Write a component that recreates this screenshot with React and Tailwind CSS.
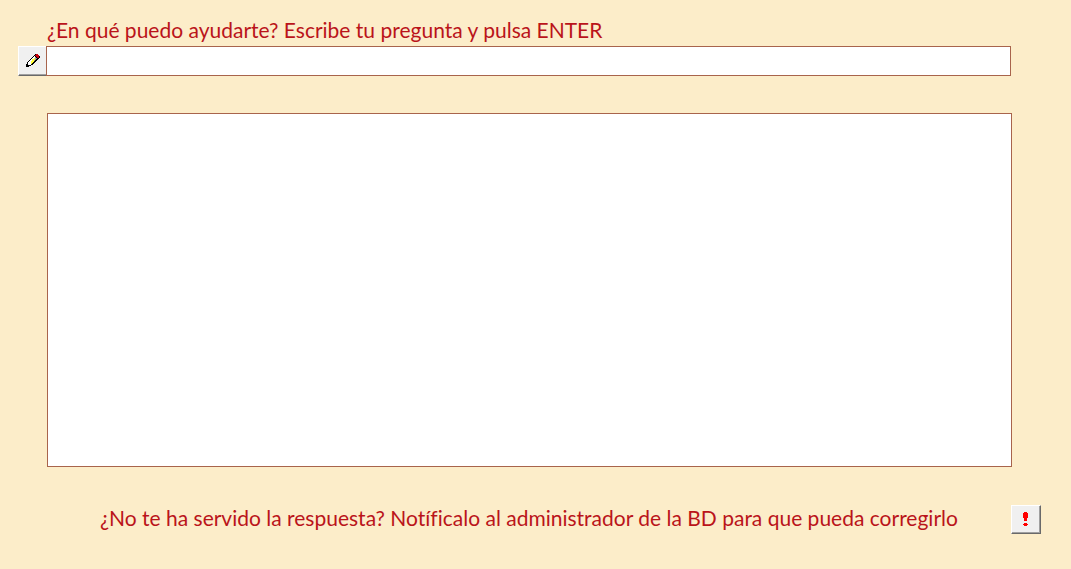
import React, { useState } from 'react';

const pencilColors = { K: '#000000', R: '#c8000c', W: '#ffffff', Y: '#ffff33', G: '#a0a0a0' };

const pencilRows = [
  '.........KRR..',
  '........KRRRR.',
  '.......KWKRRRK',
  '......KWWGKRRK',
  '.....KWWYGGKK.',
  '....KWYYYGKK..',
  '...KWWYYGKK...',
  '..KWWYYYKK....',
  '.KWWWYYKK.....',
  '.KWWWYKK......',
  'KKWWWKK.......',
  'KKKKK.........',
  'KKK...........',
];

function PencilIcon() {
  return (
    <svg width="14" height="13" viewBox="0 0 14 13" shapeRendering="crispEdges" aria-hidden="true">
      {pencilRows.flatMap((row, y) =>
        [...row].map((c, x) =>
          c === '.' ? null : <rect key={`${x}-${y}`} x={x} y={y} width="1" height="1" fill={pencilColors[c]} />
        )
      )}
    </svg>
  );
}

function AlertIcon() {
  return (
    <svg width="5" height="14" viewBox="0 0 5 14" shapeRendering="crispEdges" aria-hidden="true">
      <path fill="#ff0000" d="M1 0h3v1h1v5H4v3H1V6H0V1h1zM1 11h3v1h1v1H4v1H1v-1H0v-1h1z" />
    </svg>
  );
}

const buttonStyle =
  'flex shrink-0 items-center justify-center bg-[#f0f0f0] border-t border-l border-b border-t-white border-l-white border-b-[#696969] pb-0.5';

export default function App() {
  const [question, setQuestion] = useState('');

  return (
    <main className="flex min-h-screen flex-col bg-[#fcedc9] pt-[17px] pr-[30px] pb-[35px] pl-[18px] font-['Lato','Open_Sans',sans-serif] text-[21px] text-[#ba141a] [font-variant-ligatures:none]">
      <label htmlFor="question" className="mb-[3px] ml-[29px] leading-[26px]">
        ¿En qué puedo ayudarte? Escribe tu pregunta y pulsa ENTER
      </label>
      <div className="mr-[30px] flex h-[30px]">
        <button
          type="button"
          aria-label="Editar"
          className={`${buttonStyle} w-7 shadow-[inset_0_-1px_0_#a0a0a0]`}
        >
          <PencilIcon />
        </button>
        <input
          id="question"
          value={question}
          onChange={(e) => setQuestion(e.target.value)}
          className="min-w-0 flex-1 border border-[#a8644c] bg-white px-2 outline-none"
        />
      </div>
      <textarea
        aria-label="Respuesta"
        readOnly
        className="mt-[37px] mr-[29px] ml-[29px] flex-1 resize-none border border-[#a8644c] bg-white p-2 outline-none"
      />
      <div className="mt-[38px] ml-[29px] flex items-start">
        <p className="flex-1 text-center leading-[26px]">
          ¿No te ha servido la respuesta? Notíficalo al administrador de la BD para que pueda corregirlo
        </p>
        <button
          type="button"
          aria-label="Notificar al administrador"
          className={`${buttonStyle} h-[29px] w-[30px] border-r border-r-[#696969] pr-0.5 shadow-[inset_-1px_-1px_0_#a0a0a0]`}
        >
          <AlertIcon />
        </button>
      </div>
    </main>
  );
}
